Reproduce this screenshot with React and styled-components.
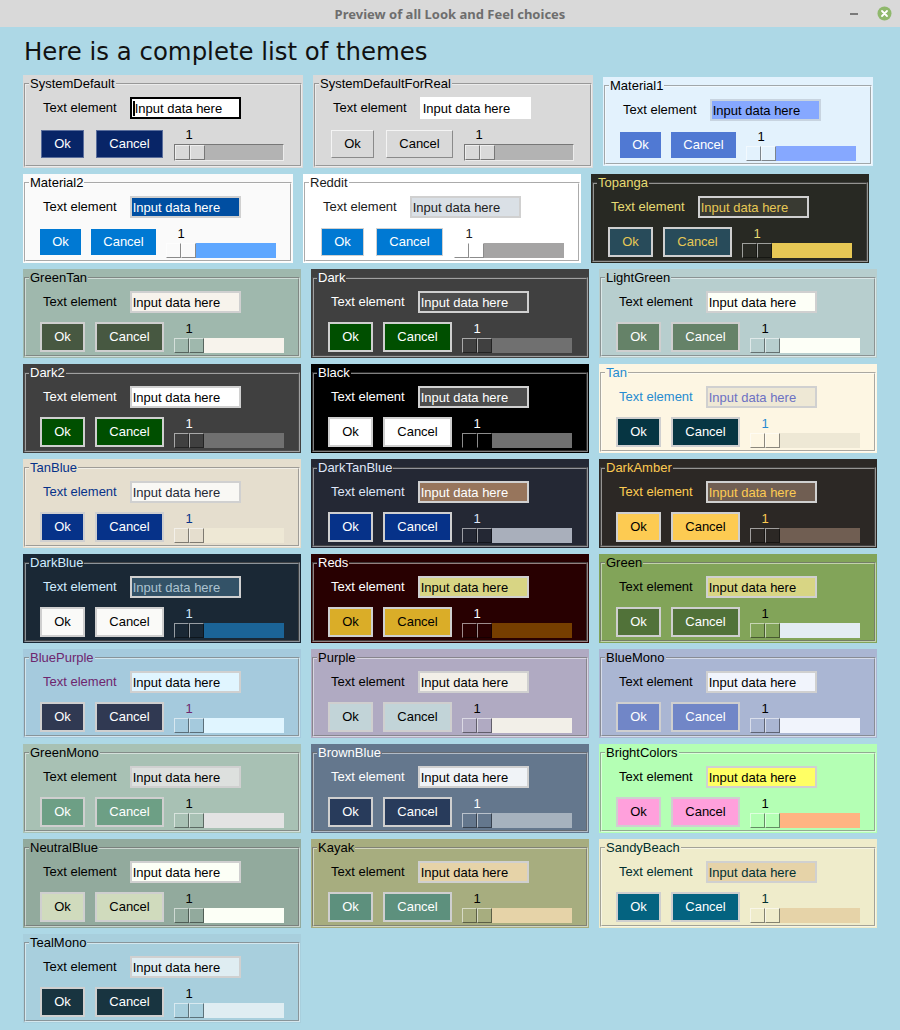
import styled, { createGlobalStyle } from "styled-components";

const GlobalStyle = createGlobalStyle`
  html, body {
    margin: 0;
    padding: 0;
  }
  body {
    background: #add8e6;
    width: 900px;
    height: 1030px;
    overflow: hidden;
    font-family: "Liberation Sans", Arial, sans-serif;
  }
`;

// mix a hex colour toward another, amount 0..1
const mix = (a, b, amt) => {
  const parse = (h) => {
    h = h.replace("#", "");
    if (h.length === 3) h = h.split("").map((c) => c + c).join("");
    return [0, 2, 4].map((i) => parseInt(h.slice(i, i + 2), 16));
  };
  const ca = parse(a);
  const cb = parse(b);
  const out = ca.map((v, i) => Math.round(v + (cb[i] - v) * amt));
  return "#" + out.map((v) => v.toString(16).padStart(2, "0")).join("");
};

const rows = [
  [
    { name: "SystemDefault", bg: "#d9d9d9", text: "#000", input: "#fff", inputText: "#000", scroll: "#b3b3b3", btnText: "#fff", btnBg: "#082567", btn: "thin", btnBorder: "#5a6e9c", inputBorder: "#000", caret: true, classic: true },
    { name: "SystemDefaultForReal", bg: "#d9d9d9", text: "#000", input: "#fff", inputText: "#000", scroll: "#b3b3b3", btnText: "#000", btnBg: "#d9d9d9", btn: "thin", btnBorder: "#f4f4f4 #8a8a8a #8a8a8a #f4f4f4", inputBorder: "#fff", classic: true },
    { name: "Material1", bg: "#E3F2FD", text: "#000", input: "#86A8FF", inputText: "#000", scroll: "#86A8FF", btnText: "#fff", btnBg: "#5079D3", btn: "flat", inputBorder: "#c8d4e0" },
  ],
  [
    { name: "Material2", bg: "#FAFAFA", text: "#000", input: "#004EA1", inputText: "#fff", scroll: "#5EA7FF", btnText: "#fff", btnBg: "#0079D3", btn: "flat" },
    { name: "Reddit", bg: "#ffffff", text: "#1a1a1b", input: "#dae0e6", inputText: "#222222", scroll: "#a5a4a4", btnText: "#fff", btnBg: "#0079d3", btn: "thin", btnBorder: "#d0d0d0" },
    { name: "Topanga", bg: "#282923", text: "#E7DB74", input: "#393a32", inputText: "#E7C855", scroll: "#E7C855", btnText: "#E7C855", btnBg: "#284B5A" },
  ],
  [
    { name: "GreenTan", bg: "#9FB8AD", text: "#000", input: "#F7F3EC", inputText: "#000", scroll: "#F7F3EC", btnText: "#fff", btnBg: "#475841" },
    { name: "Dark", bg: "#404040", text: "#fff", input: "#4D4D4D", inputText: "#fff", scroll: "#707070", btnText: "#fff", btnBg: "#004F00" },
    { name: "LightGreen", bg: "#B7CECE", text: "#000", input: "#FDFFF7", inputText: "#000", scroll: "#FDFFF7", btnText: "#fff", btnBg: "#658268" },
  ],
  [
    { name: "Dark2", bg: "#404040", text: "#fff", input: "#fff", inputText: "#000", scroll: "#707070", btnText: "#fff", btnBg: "#004F00" },
    { name: "Black", bg: "#000000", text: "#fff", input: "#4D4D4D", inputText: "#fff", scroll: "#707070", btnText: "#000", btnBg: "#fff" },
    { name: "Tan", bg: "#fdf6e3", text: "#268bd1", input: "#eee8d5", inputText: "#6c71c3", scroll: "#eee8d5", btnText: "#fff", btnBg: "#063542" },
  ],
  [
    { name: "TanBlue", bg: "#e5dece", text: "#063289", input: "#f9f8f4", inputText: "#242834", scroll: "#eee8d5", btnText: "#fff", btnBg: "#063289" },
    { name: "DarkTanBlue", bg: "#242834", text: "#dfe6f8", input: "#97755c", inputText: "#fff", scroll: "#a9afbb", btnText: "#fff", btnBg: "#063289" },
    { name: "DarkAmber", bg: "#2c2825", text: "#fdcb52", input: "#705e52", inputText: "#fdcb52", scroll: "#705e52", btnText: "#000", btnBg: "#fdcb52" },
  ],
  [
    { name: "DarkBlue", bg: "#1a2835", text: "#d1ecff", input: "#335267", inputText: "#acc2d0", scroll: "#1b6497", btnText: "#000", btnBg: "#fafaf8" },
    { name: "Reds", bg: "#280001", text: "#fff", input: "#d8d584", inputText: "#000", scroll: "#763e00", btnText: "#000", btnBg: "#daad28" },
    { name: "Green", bg: "#82a459", text: "#000", input: "#d8d584", inputText: "#000", scroll: "#e3ecf3", btnText: "#fff", btnBg: "#517239" },
  ],
  [
    { name: "BluePurple", bg: "#A5CADD", text: "#6E266E", input: "#E0F5FF", inputText: "#000", scroll: "#E0F5FF", btnText: "#fff", btnBg: "#303952" },
    { name: "Purple", bg: "#B0AAC2", text: "#000", input: "#F2EFE8", inputText: "#000", scroll: "#F2EFE8", btnText: "#000", btnBg: "#C2D4D8" },
    { name: "BlueMono", bg: "#AAB6D3", text: "#000", input: "#F1F4FC", inputText: "#000", scroll: "#F1F4FC", btnText: "#fff", btnBg: "#7186C7" },
  ],
  [
    { name: "GreenMono", bg: "#A8C1B4", text: "#000", input: "#DDE0DE", inputText: "#000", scroll: "#E3E3E3", btnText: "#fff", btnBg: "#6D9F85" },
    { name: "BrownBlue", bg: "#64778d", text: "#fff", input: "#f0f3f7", inputText: "#000", scroll: "#A6B2BE", btnText: "#fff", btnBg: "#283b5b" },
    { name: "BrightColors", bg: "#b4ffb4", text: "#000", input: "#ffff64", inputText: "#000", scroll: "#ffb482", btnText: "#000", btnBg: "#ffa0dc" },
  ],
  [
    { name: "NeutralBlue", bg: "#92aa9d", text: "#000", input: "#fcfff6", inputText: "#000", scroll: "#fcfff6", btnText: "#000", btnBg: "#d0dbbd" },
    { name: "Kayak", bg: "#a7ad7f", text: "#000", input: "#e6d3a8", inputText: "#000", scroll: "#e6d3a8", btnText: "#fff", btnBg: "#5d907d" },
    { name: "SandyBeach", bg: "#efeccb", text: "#012f2f", input: "#e6d3a8", inputText: "#012f2f", scroll: "#e6d3a8", btnText: "#fff", btnBg: "#046380" },
  ],
  [
    { name: "TealMono", bg: "#a8cfdd", text: "#000", input: "#dfedf2", inputText: "#000", scroll: "#dfedf2", btnText: "#fff", btnBg: "#183440" },
  ],
];

const App = () => {
  return (
    <Window>
      <GlobalStyle />
      <TitleBar>
        <span />
        <WindowTitle>Preview of all Look and Feel choices</WindowTitle>
        <Controls>
          <MinimizeBar />
          <svg width="15" height="15" viewBox="0 0 15 15">
            <circle cx="7.5" cy="7.5" r="7" fill="#8fb86c" />
            <path d="M5 5 L10 10 M10 5 L5 10" stroke="#fff" strokeWidth="1.8" strokeLinecap="round" />
          </svg>
        </Controls>
      </TitleBar>
      <Heading>Here is a complete list of themes</Heading>
      <Grid>
        {rows.map((row, i) => (
          <Row key={i}>
            {row.map((t) => (
              <ThemeTile key={t.name} t={t} />
            ))}
          </Row>
        ))}
      </Grid>
    </Window>
  );
};

const ThemeTile = ({ t }) => {
  const light = mix(t.bg, "#ffffff", 0.5);
  const gripLight = mix(t.bg, "#ffffff", 0.55);
  const gripDark = mix(t.bg, "#000000", 0.45);
  const kind = t.btn || "normal";
  const btnBorder = t.btnBorder || "#cfcfcf";
  return (
    <Panel $bg={t.bg} $fg={t.text}>
      <Frame $groove={light}>
        <FrameTitle>{t.name}</FrameTitle>
        <Body $classic={t.classic}>
          <InputRow>
            <Label>Text element</Label>
            <Entry $bg={t.input} $fg={t.inputText} $border={t.inputBorder || "#d0d0d0"}>
              {t.caret && <Caret />}
              Input data here
            </Entry>
          </InputRow>
          <ButtonRow>
            <Button $kind={kind} $w={41} $bg={t.btnBg} $fg={t.btnText} $border={btnBorder}>
              Ok
            </Button>
            <Button $kind={kind} $w={65} $bg={t.btnBg} $fg={t.btnText} $border={btnBorder}>
              Cancel
            </Button>
            <Slider>
              <SliderValue>1</SliderValue>
              <Trough $bg={t.scroll} $classic={t.classic} $light={light} $dark={gripDark}>
                <Grip $bg={t.bg} $light={gripLight} $dark={gripDark} />
                <Grip $bg={t.bg} $light={gripLight} $dark={gripDark} />
              </Trough>
            </Slider>
          </ButtonRow>
        </Body>
      </Frame>
    </Panel>
  );
};

const Window = styled.div`
  display: flex;
  flex-direction: column;
  width: 900px;
  height: 1030px;
`;

const TitleBar = styled.div`
  height: 27px;
  background: #d9d9d9;
  display: grid;
  grid-template-columns: 1fr auto 1fr;
  align-items: center;
`;

const WindowTitle = styled.div`
  font-family: "Noto Sans", "DejaVu Sans", sans-serif;
  font-weight: bold;
  font-size: 13px;
  color: #6e6e6e;
  white-space: nowrap;
`;

const Controls = styled.div`
  justify-self: end;
  display: flex;
  align-items: center;
  gap: 19px;
  padding-right: 8px;
`;

const MinimizeBar = styled.span`
  width: 8px;
  height: 2px;
  background: #7a7a7a;
`;

const Heading = styled.h1`
  margin: 11px 0 9px 24px;
  font-family: "DejaVu Sans", sans-serif;
  font-weight: normal;
  font-size: 24.4px;
  line-height: 28px;
  color: #111;
`;

const Grid = styled.div`
  display: flex;
  flex-direction: column;
  gap: 6px;
  padding-left: 23px;
`;

const Row = styled.div`
  display: flex;
  align-items: center;
  gap: 10px;
`;

const Panel = styled.div`
  background: ${(p) => p.$bg};
  color: ${(p) => p.$fg};
  padding: 0 1px 1px;
`;

const Frame = styled.fieldset`
  margin: 0;
  min-width: 0;
  padding: 0 3px 2px;
  border: 2px groove ${(p) => p.$groove};
`;

const FrameTitle = styled.legend`
  padding: 0 1px;
  font-size: 13px;
  line-height: 17px;
`;

const Body = styled.div`
  display: flex;
  flex-direction: column;
  gap: 7px;
  padding: 5px ${(p) => (p.$classic ? 13 : 11)}px ${(p) => (p.$classic ? 2 : 0)}px 11px;
`;

const InputRow = styled.div`
  display: flex;
  align-items: center;
  gap: 13px;
  margin-left: 3px;
`;

const Label = styled.span`
  font-size: 13px;
  line-height: 16px;
  white-space: nowrap;
`;

const Entry = styled.div`
  box-sizing: border-box;
  width: 111px;
  height: 22px;
  display: flex;
  align-items: center;
  padding: 0 1px;
  border: 2px solid ${(p) => p.$border};
  background: ${(p) => p.$bg};
  color: ${(p) => p.$fg};
  font-size: 13px;
  white-space: nowrap;
  overflow: hidden;
`;

const Caret = styled.span`
  width: 2px;
  height: 15px;
  background: #000;
`;

const ButtonRow = styled.div`
  display: flex;
  align-items: center;
  gap: 10px;
`;

const Button = styled.button`
  box-sizing: border-box;
  width: ${(p) => p.$w + (p.$kind === "flat" ? 0 : p.$kind === "thin" ? 2 : 4)}px;
  height: ${(p) => (p.$kind === "flat" ? 26 : p.$kind === "thin" ? 28 : 30)}px;
  margin: ${(p) => (p.$kind === "thin" ? "1px" : "0")};
  padding: 0;
  border-style: ${(p) => (p.$kind === "flat" ? "none" : "solid")};
  border-width: ${(p) => (p.$kind === "thin" ? 1 : 2)}px;
  border-color: ${(p) => p.$border};
  background: ${(p) => p.$bg};
  color: ${(p) => p.$fg};
  font-family: "Liberation Sans", Arial, sans-serif;
  font-size: 13px;
`;

const Slider = styled.div`
  width: 110px;
  display: flex;
  flex-direction: column;
`;

const SliderValue = styled.span`
  width: 30px;
  height: 18px;
  line-height: 18px;
  text-align: center;
  font-size: 13px;
`;

const Trough = styled.div`
  display: flex;
  height: 15px;
  background: ${(p) => p.$bg};
  border: ${(p) => (p.$classic ? "1px solid" : "none")};
  border-color: ${(p) => `${p.$dark} ${p.$light} ${p.$light} ${p.$dark}`};
`;

const Grip = styled.span`
  box-sizing: border-box;
  width: 15px;
  height: 15px;
  background: ${(p) => p.$bg};
  border: 1px solid;
  border-color: ${(p) => `${p.$light} ${p.$dark} ${p.$dark} ${p.$light}`};
`;

export default App;
